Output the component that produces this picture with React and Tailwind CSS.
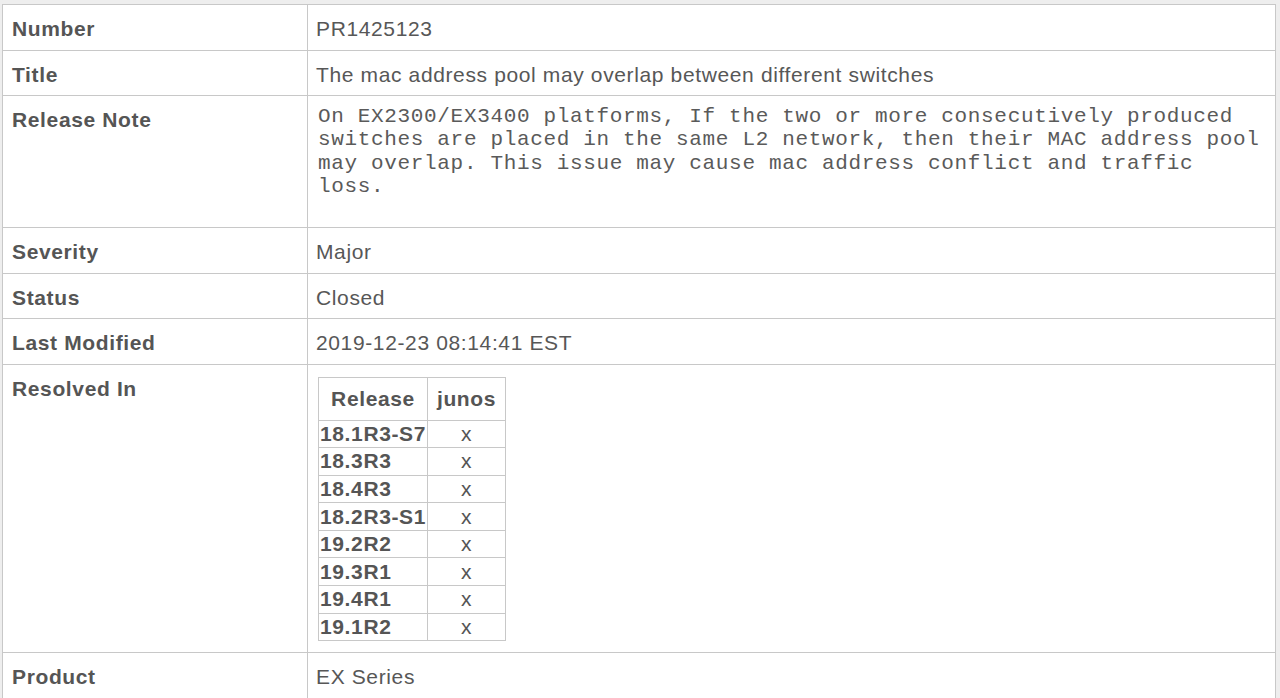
import React from 'react';

const sans = "font-['Liberation_Sans',Arial,sans-serif]";

const releases = ['18.1R3-S7', '18.3R3', '18.4R3', '18.2R3-S1', '19.2R2', '19.3R1', '19.4R1', '19.1R2'];

const Label = ({ children }) => (
    <td className="w-[305px] border border-[#c8c8c8] pl-[9px] pt-[12px] align-top font-bold text-[#555]">
        {children}
    </td>
);

const Value = ({ children, className = '' }) => (
    <td className={`border border-[#c8c8c8] pl-[8px] align-top text-[#575757] ${className}`}>{children}</td>
);

const App = () => {
    return (
        <div className={`min-h-screen bg-[#eeeeee] pt-[4px] pl-[2px] ${sans} text-[21px] leading-[24px] tracking-[0.03em]`}>
            <table className="w-[1274px] border-collapse bg-white">
                <tbody>
                    <tr className="h-[45.5px]">
                        <Label>Number</Label>
                        <Value className="pt-[12px]">PR1425123</Value>
                    </tr>
                    <tr className="h-[45.5px]">
                        <Label>Title</Label>
                        <Value className="pt-[12px]">The mac address pool may overlap between different switches</Value>
                    </tr>
                    <tr className="h-[132px]">
                        <Label>Release Note</Label>
                        <Value className="pt-[9px]">
                            <pre className="ml-[2px] font-['Liberation_Mono','Courier_New',monospace] text-[21px] leading-[23.3px] tracking-[0.66px] text-[#5a5a5a] whitespace-pre-wrap">
                                {'On EX2300/EX3400 platforms, If the two or more consecutively produced\nswitches are placed in the same L2 network, then their MAC address pool\nmay overlap. This issue may cause mac address conflict and traffic\nloss.'}
                            </pre>
                        </Value>
                    </tr>
                    <tr className="h-[45.5px]">
                        <Label>Severity</Label>
                        <Value className="pt-[12px]">Major</Value>
                    </tr>
                    <tr className="h-[45.5px]">
                        <Label>Status</Label>
                        <Value className="pt-[12px]">Closed</Value>
                    </tr>
                    <tr className="h-[45.5px]">
                        <Label>Last Modified</Label>
                        <Value className="pt-[12px]">2019-12-23 08:14:41 EST</Value>
                    </tr>
                    <tr className="h-[288px]">
                        <Label>Resolved In</Label>
                        <Value className="pt-[12px]">
                            {/* nested release table */}
                            <table className="ml-[2px] border-collapse border border-[#c8c8c8]">
                                <thead>
                                    <tr className="h-[43px]">
                                        <th className="w-[109px] border border-[#c8c8c8] text-center font-bold text-[#555]">Release</th>
                                        <th className="w-[78px] border border-[#c8c8c8] text-center font-bold text-[#555]">junos</th>
                                    </tr>
                                </thead>
                                <tbody>
                                    {releases.map((r) => (
                                        <tr key={r} className="h-[27.6px]">
                                            <td className="border border-[#c8c8c8] pl-[1px] font-bold leading-[26px] text-[#555]">{r}</td>
                                            <td className="border border-[#c8c8c8] text-center leading-[26px] text-[#555]">x</td>
                                        </tr>
                                    ))}
                                </tbody>
                            </table>
                        </Value>
                    </tr>
                    <tr className="h-[46px]">
                        <Label>Product</Label>
                        <Value className="pt-[12px]">EX Series</Value>
                    </tr>
                </tbody>
            </table>
        </div>
    );
};

export default App;
